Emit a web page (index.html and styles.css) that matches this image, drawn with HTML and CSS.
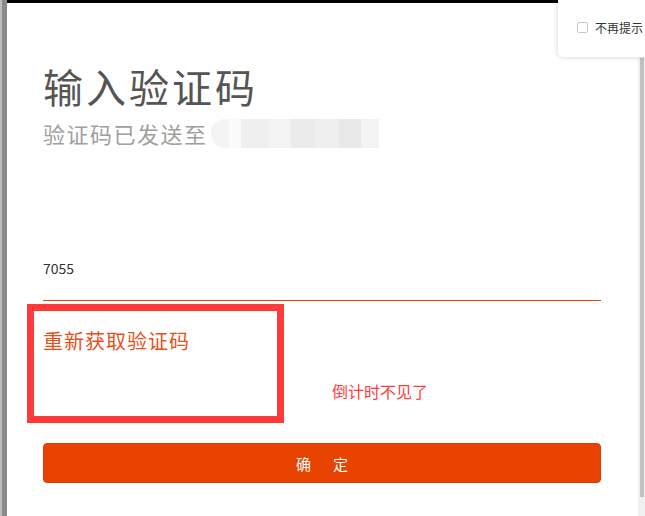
FILE: index.html
```html
<!DOCTYPE html>
<html>
  <head>
    <meta charset="utf-8">
    <title>输入验证码</title>
    <link rel="stylesheet" href="styles.css">
  </head>
  <body>
    <div class="frame">
      <div class="edge"></div>
      <div class="page">
        <h1 class="title">输入验证码</h1>
        <p class="subtitle">验证码已发送至<span class="masked"></span></p>

        <div class="code-field">
          <span class="code-value">7055</span>
        </div>

        <div class="resend-row">
          <a class="resend-link">重新获取验证码</a>
        </div>

        <button class="confirm-button">确<span class="gap"></span>定</button>

        <!-- 标注 -->
        <div class="mark-box"></div>
        <p class="mark-note">倒计时不见了</p>
      </div>
      <div class="scrollbar">
        <div class="scrollbar-thumb"></div>
      </div>
    </div>

    <div class="tip-popup">
      <label class="tip-label"><span class="tip-check"></span>不再提示</label>
    </div>
  </body>
</html>
```

FILE: styles.css
```css
body {
  margin: 0;
  font-family: "Noto Sans CJK SC", "Liberation Sans", sans-serif;
  background-color: #fff;
}

.frame {
  display: flex;
  height: 516px;
  overflow: hidden;
}

.edge {
  width: 5px;
  border-left: 2px solid #bdbdbd;
  background-color: #8a8a8a;
}

.page {
  position: relative;
  flex: 1;
  border-top: 3px solid #000;
  padding: 0 37px 0 36px;
}

.title {
  margin: 58px 0 0 0;
  font-size: 40px;
  font-weight: normal;
  line-height: 50px;
  letter-spacing: 3px;
  color: #555;
}

.subtitle {
  display: flex;
  align-items: center;
  margin: 7px 0 0 0;
  font-size: 22px;
  line-height: 30px;
  letter-spacing: 1.5px;
  color: #a0a0a0;
}

.masked {
  display: inline-block;
  width: 168px;
  height: 29px;
  margin-left: 3px;
  border-radius: 14px 0 0 14px;
  background: linear-gradient(90deg, #f4f4f4 0 18px, #fafafa 18px 30px, #efefef 30px 58px, #f3f3f3 58px 80px, #ebebeb 80px 104px, #efefef 104px 128px, #e9e9e9 128px 150px, #f3f3f3 150px);
}

.code-field {
  margin-top: 107px;
  height: 45px;
  border-bottom: 1px solid #e84300;
}

.code-value {
  font-size: 14px;
  line-height: 20px;
  color: #333;
}

.resend-row {
  margin-top: 25px;
  height: 30px;
}

.resend-link {
  font-size: 20px;
  line-height: 30px;
  letter-spacing: 1px;
  color: #e8501a;
}

.confirm-button {
  display: block;
  width: 100%;
  height: 40px;
  margin-top: 87px;
  border: 1px solid #d63e00;
  border-radius: 4px;
  background-color: #e84300;
  color: #fff;
  font-family: inherit;
  font-size: 15px;
}

.gap {
  display: inline-block;
  width: 22px;
}

.mark-box {
  position: absolute;
  left: 20px;
  top: 301px;
  width: 243px;
  height: 105px;
  border: 7px solid #ff3a3a;
}

.mark-note {
  position: absolute;
  left: 325px;
  top: 376px;
  margin: 0;
  font-size: 16px;
  line-height: 24px;
  color: #ff3b3b;
}

.scrollbar {
  width: 7px;
  background-color: #f0f0f0;
  padding-top: 58px;
}

.scrollbar-thumb {
  width: 4px;
  height: 439px;
  margin-left: 2px;
  background-color: #c1c1c1;
}

.tip-popup {
  position: absolute;
  top: 0;
  right: 0;
  width: 87px;
  height: 57px;
  background-color: #fff;
  border-bottom-left-radius: 5px;
  box-shadow: 0 0 5px rgba(0, 0, 0, 0.2);
  display: flex;
  align-items: center;
}

.tip-label {
  display: flex;
  align-items: center;
  margin: 0 0 3px 19px;
  font-size: 12px;
  color: #333;
  white-space: nowrap;
}

.tip-check {
  width: 9px;
  height: 9px;
  margin-right: 7px;
  border: 1px solid #c8c8c8;
  border-radius: 2px;
}
```
